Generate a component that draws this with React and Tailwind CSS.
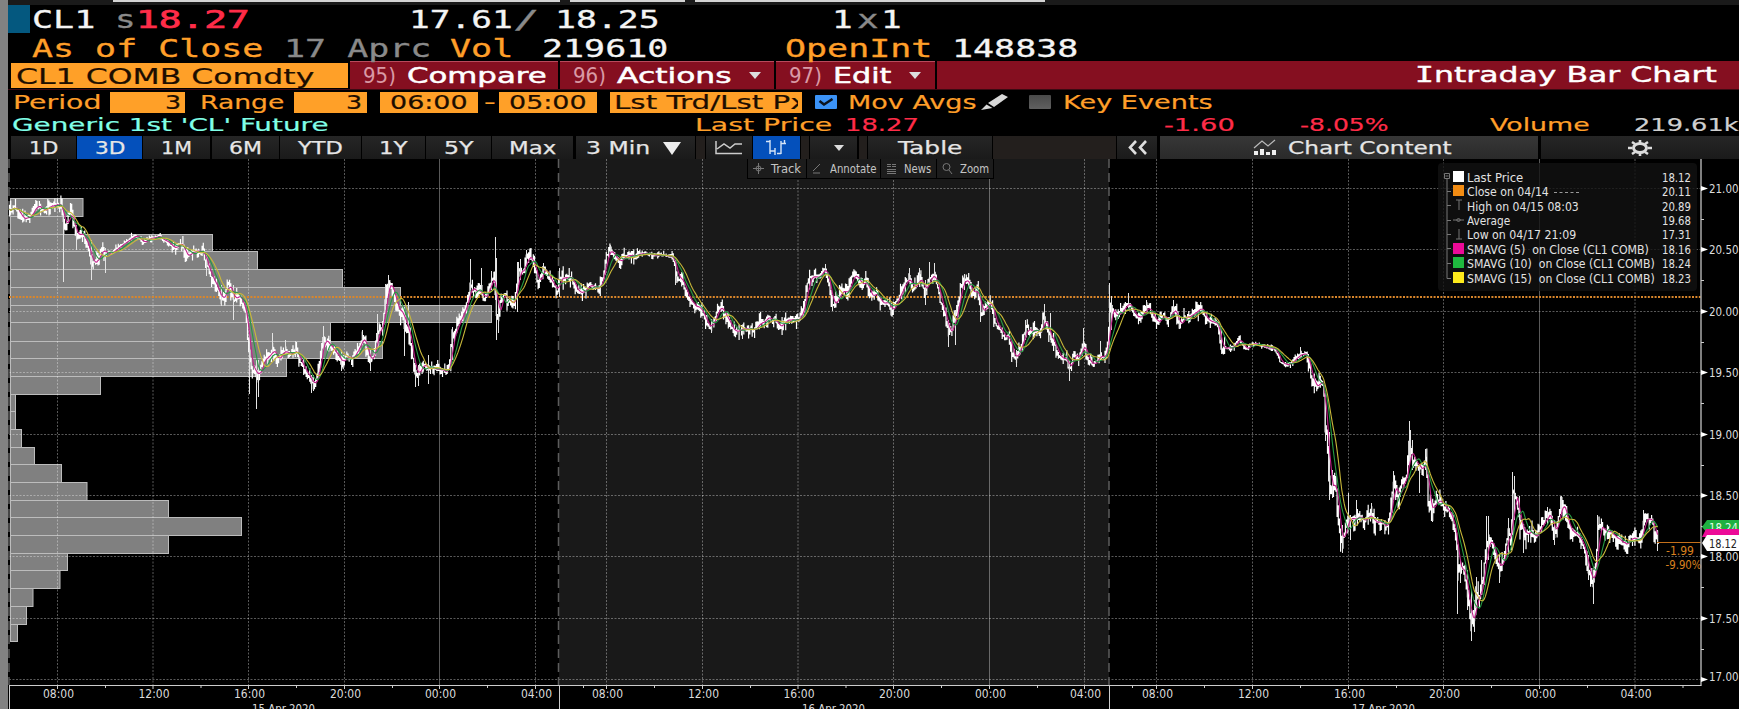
import React, { useLayoutEffect, useRef } from 'react';
import clsx from 'clsx';

// Terminal type is wider than the system fonts, so each label is stretched to the width of its box
const Fit = ({ children, className }) => {
  const box = useRef(null);
  const text = useRef(null);

  useLayoutEffect(() => {
    const scale = box.current.clientWidth / text.current.offsetWidth;
    text.current.style.transform = `scaleX(${scale})`;
  }, [children]);

  return (
    <div ref={box} className={clsx('shrink-0 whitespace-pre', className)}>
      <span ref={text} className="inline-block origin-left">{children}</span>
    </div>
  );
};

const MONO = "font-['DejaVu_Sans_Mono',monospace]";

const profile = [
  [198, 83], [215.7, 64], [234, 212.5], [251, 257.5], [269, 342.5], [287, 400.5], [304.5, 491.5],
  [322, 330.5], [340.5, 382.5], [357.5, 286.5], [375.5, 100.5], [393.5, 15.5], [410.5, 15.5],
  [429, 21.5], [447, 34.5], [464, 61.5], [482, 87], [500, 168.5], [517, 241.5], [535, 168.5],
  [553, 67.5], [570, 60], [588, 33], [606, 26.5], [623.5, 17.5], [641, 0],
];

const closes = [
  [9, 212], [13, 206], [18, 212], [23, 220], [27, 218], [31, 214], [35, 207], [40, 207], [44, 212], [48, 206],
  [52, 205], [58, 204], [61, 205], [63, 222], [66, 230], [68, 215], [71, 215], [73, 224], [76, 236], [80, 232],
  [84, 238], [88, 247], [92, 264], [95, 262], [98, 257], [101, 249], [104, 253], [110, 254], [116, 249],
  [122, 244], [127, 241], [131, 238], [135, 236], [139, 239], [143, 243], [147, 238], [153, 238], [158, 236],
  [163, 240], [168, 242], [173, 250], [177, 247], [182, 244], [186, 258], [190, 254], [196, 250], [203, 251],
  [206, 267], [209, 270], [213, 282], [217, 290], [220, 298], [223, 297], [226, 290], [229, 280], [231, 294],
  [234, 302], [238, 296], [242, 303], [246, 317], [249, 355], [252, 372], [255, 370], [258, 380], [261, 365],
  [265, 358], [269, 355], [273, 348], [277, 362], [281, 352], [286, 350], [291, 355], [296, 350], [300, 362],
  [304, 370], [309, 378], [313, 386], [317, 378], [320, 358], [323, 338], [327, 343], [332, 350], [337, 355],
  [341, 363], [346, 355], [351, 360], [356, 352], [360, 343], [363, 336], [366, 350], [370, 362], [374, 352],
  [377, 332], [382, 328], [385, 300], [388, 282], [391, 287], [395, 302], [399, 315], [402, 308], [405, 330],
  [408, 328], [411, 350], [414, 367], [418, 375], [422, 363], [427, 370], [432, 367], [436, 371], [440, 370],
  [445, 372], [449, 368], [452, 335], [456, 328], [461, 315], [466, 305], [470, 285], [474, 292], [480, 290],
  [484, 300], [489, 288], [494, 275], [497, 325], [500, 300], [504, 295], [509, 300], [514, 304], [518, 270],
  [522, 275], [526, 257], [530, 258], [534, 265], [538, 285], [543, 267], [547, 275], [552, 285], [557, 292],
  [559, 278], [564, 278], [570, 278], [574, 284], [578, 293], [584, 290], [590, 285], [598, 290], [603, 276],
  [606, 256], [610, 249], [614, 257], [619, 263], [627, 255], [635, 256], [645, 253], [655, 256], [665, 255],
  [672, 257], [675, 270], [678, 280], [682, 280], [686, 293], [692, 305], [700, 308], [705, 320], [710, 328],
  [714, 318], [720, 307], [725, 315], [729, 325], [734, 332], [742, 330], [748, 328], [753, 331], [758, 325],
  [764, 320], [768, 318], [773, 320], [780, 327], [785, 320], [792, 320], [798, 320], [803, 310], [808, 280],
  [813, 278], [819, 276], [825, 268], [828, 280], [832, 308], [837, 298], [842, 290], [847, 295], [851, 278],
  [855, 274], [860, 285], [866, 282], [871, 298], [876, 293], [882, 305], [887, 300], [891, 312], [896, 302],
  [901, 290], [906, 280], [909, 277], [913, 290], [918, 280], [920, 275], [924, 292], [929, 280], [934, 274],
  [938, 290], [941, 305], [945, 315], [948, 335], [952, 328], [956, 315], [960, 290], [964, 278], [969, 285],
  [973, 293], [977, 288], [981, 315], [986, 305], [991, 302], [995, 325], [1000, 330], [1004, 338], [1008, 335],
  [1012, 355], [1016, 357], [1021, 345], [1026, 328], [1031, 333], [1036, 330], [1040, 335], [1043, 318],
  [1047, 328], [1052, 340], [1056, 350], [1060, 360], [1066, 360], [1070, 372], [1073, 352], [1079, 358],
  [1083, 342], [1087, 360], [1093, 365], [1099, 355], [1104, 360], [1108, 340], [1110, 300], [1113, 315],
  [1118, 314], [1124, 308], [1128, 302], [1133, 312], [1138, 320], [1143, 312], [1148, 307], [1153, 318],
  [1158, 322], [1163, 313], [1168, 322], [1173, 307], [1179, 325], [1184, 318], [1189, 315], [1195, 312],
  [1200, 308], [1206, 320], [1214, 322], [1218, 325], [1221, 350], [1227, 348], [1233, 347], [1239, 338],
  [1245, 350], [1252, 343], [1260, 345], [1268, 348], [1274, 348], [1280, 362], [1285, 365], [1292, 362],
  [1298, 355], [1306, 354], [1309, 365], [1311, 380], [1317, 387], [1321, 378], [1324, 395], [1325, 430],
  [1327, 432], [1329, 485], [1332, 493], [1335, 475], [1338, 525], [1342, 545], [1346, 522], [1349, 520],
  [1354, 520], [1359, 515], [1364, 520], [1370, 515], [1374, 523], [1380, 522], [1387, 528], [1390, 510],
  [1394, 480], [1398, 500], [1403, 480], [1406, 482], [1409, 445], [1413, 460], [1418, 465], [1422, 470],
  [1426, 458], [1428, 505], [1432, 510], [1437, 500], [1442, 502], [1447, 510], [1452, 520], [1455, 530],
  [1458, 570], [1463, 568], [1467, 590], [1470, 620], [1473, 622], [1476, 595], [1480, 595], [1483, 575],
  [1486, 545], [1489, 540], [1493, 545], [1497, 565], [1500, 570], [1504, 555], [1508, 530], [1511, 545],
  [1513, 490], [1517, 502], [1520, 525], [1524, 535], [1529, 530], [1535, 536], [1540, 527], [1546, 518],
  [1550, 515], [1554, 535], [1558, 520], [1561, 500], [1564, 510], [1568, 525], [1573, 533], [1578, 535],
  [1583, 545], [1588, 570], [1593, 583], [1596, 560], [1598, 525], [1602, 528], [1608, 533], [1614, 535],
  [1620, 540], [1625, 545], [1630, 538], [1634, 540], [1640, 540], [1643, 525], [1648, 517], [1652, 520],
  [1655, 535], [1658, 543],
];

const spikes = [
  [63, 210, 282], [76, 225, 250], [91, 240, 280], [105, 248, 273], [206, 255, 276], [221, 285, 306], [233, 285, 320],
  [249, 330, 394], [256, 360, 409], [258, 360, 397], [272, 333, 352], [285, 340, 352], [295, 341, 352], [311, 375, 393],
  [313, 375, 391], [323, 326, 350], [341, 350, 371], [362, 330, 345], [370, 350, 371], [377, 314, 340], [385, 284, 310],
  [388, 275, 292], [408, 302, 330], [404, 315, 356], [415, 365, 387], [418, 365, 386], [428, 355, 384], [452, 327, 360],
  [470, 259, 290], [481, 268, 292], [491, 271, 290], [495, 237, 300], [496, 258, 340], [498, 300, 333], [517, 262, 312],
  [518, 262, 285], [520, 259, 280], [526, 250, 265], [543, 263, 275], [559, 268, 297], [610, 245, 255], [675, 260, 285],
  [711, 320, 333], [742, 325, 339], [825, 264, 275], [832, 300, 311], [891, 303, 316], [909, 268, 282], [919, 268, 282],
  [925, 280, 305], [929, 262, 285], [934, 263, 280], [948, 320, 347], [955, 310, 345], [964, 274, 290], [980, 295, 322],
  [1016, 350, 367], [1025, 320, 340], [1044, 304, 325], [1050, 313, 340], [1069, 360, 381], [1083, 328, 350],
  [1100, 341, 360], [1109, 283, 350], [1111, 296, 330], [1128, 293, 308], [1146, 300, 312], [1173, 300, 312],
  [1179, 315, 329], [1221, 330, 354], [1300, 347, 356], [1325, 395, 441], [1329, 432, 500], [1332, 470, 498],
  [1342, 525, 553], [1348, 493, 525], [1350, 515, 540], [1356, 500, 520], [1371, 503, 518], [1393, 471, 500],
  [1409, 421, 465], [1410, 430, 460], [1412, 440, 470], [1419, 465, 493], [1425, 449, 470], [1432, 505, 522],
  [1457, 545, 614], [1460, 560, 583], [1467, 570, 610], [1471, 590, 641], [1474, 600, 632], [1476, 577, 610],
  [1481, 560, 595], [1486, 516, 560], [1488, 516, 560], [1499, 555, 583], [1508, 518, 555], [1512, 472, 530],
  [1514, 476, 520], [1519, 496, 520], [1523, 525, 553], [1547, 507, 525], [1554, 520, 545], [1561, 496, 515],
  [1588, 555, 580], [1593, 570, 604], [1597, 515, 550], [1643, 510, 535], [1657, 530, 551],
];

const BAR_STEP = 1.196;

const priceAt = (x) => {
  const i = closes.findIndex((p) => p[0] >= x);
  if (i <= 0) return closes[0][1];
  const [x0, y0] = closes[i - 1];
  const [x1, y1] = closes[i];
  return y0 + ((y1 - y0) * (x - x0)) / (x1 - x0);
};

const buildBars = () => {
  let seed = 41;
  const rand = () => {
    seed = (seed * 16807) % 2147483647;
    return seed / 2147483647;
  };
  const bars = [];
  for (let x = 9.5; x <= 1658; x += BAR_STEP) {
    const quiet = (x > 108 && x < 172) || (x > 640 && x < 672) || (x > 1225 && x < 1305);
    const amp = quiet ? 2.2 : x > 1325 ? 5.5 : 4.6;
    const close = priceAt(x) + (rand() - 0.5) * amp;
    const open = bars.length ? bars[bars.length - 1].close : close;
    bars.push({
      x,
      close,
      open,
      high: Math.min(open, close) - rand() * rand() * amp * 2.4,
      low: Math.max(open, close) + rand() * rand() * amp * 2.4,
    });
  }
  return bars;
};

const bars = buildBars();
const barPath = bars
  .map((b) => `M${b.x.toFixed(1)} ${b.high.toFixed(1)}V${b.low.toFixed(1)}M${b.x.toFixed(1)} ${b.close.toFixed(1)}h1.2`)
  .join('');
const spikePath = spikes.map(([x, top, bottom]) => `M${x + 0.5} ${top}V${bottom}`).join('');

const average = (n) =>
  bars
    .map((b, i) => {
      const part = bars.slice(Math.max(0, i - n + 1), i + 1);
      const y = part.reduce((sum, p) => sum + p.close, 0) / part.length;
      return `${b.x.toFixed(1)},${y.toFixed(1)}`;
    })
    .join(' ');

const hours = [
  [57.5, '08:00'], [153, '12:00'], [248.5, '16:00'], [344.5, '20:00'], [439.5, '00:00', true], [535.5, '04:00'],
  [606.5, '08:00'], [702.5, '12:00'], [798, '16:00'], [893.5, '20:00'], [989.5, '00:00', true], [1084.5, '04:00'],
  [1156.5, '08:00'], [1252.5, '12:00'], [1348.5, '16:00'], [1443.5, '20:00'], [1539.5, '00:00', true], [1635, '04:00'],
];
const prices = ['21.00', '20.50', '20.00', '19.50', '19.00', '18.50', '18.00', '17.50', '17.00'];
const dates = [[252, '15 Apr 2020'], [802, '16 Apr 2020'], [1352, '17 Apr 2020']];
const priceY = (i) => Math.round(188 + i * 61.4) + 0.5;

const Chart = () => (
  <svg viewBox="8 159 1731 550" className="block h-[550px] w-[1731px] font-['DejaVu_Sans_Condensed','DejaVu_Sans',sans-serif] text-[12px]">
    <rect x="8" y="159" width="1731" height="550" fill="#000" />
    <rect x="559" y="159" width="550" height="526" fill="#191919" />

    {/* Volume profile */}
    {profile.slice(0, -1).map(([y, right], i) => (
      <rect key={y} x="10.5" y={Math.round(y) + 0.5} width={right - 10.5} height={Math.round(profile[i + 1][0]) - Math.round(y)} fill="#808080" stroke="#bcbcbc" />
    ))}

    {/* Grid */}
    {prices.map((p, i) => (
      <line key={p} x1="9" x2="1701" y1={priceY(i)} y2={priceY(i)} stroke="#fff" strokeOpacity="0.35" strokeDasharray="2 1.5" />
    ))}
    {hours.map(([x, , solid]) => (
      <line key={x} x1={x} x2={x} y1="159" y2="685" stroke="#fff" strokeOpacity="0.35" strokeDasharray={solid ? undefined : '2 1.5'} />
    ))}
    {[9, 558.5, 1109].map((x) => (
      <line key={x} x1={x} x2={x} y1="159" y2="685" stroke="#5c5c5c" strokeWidth="1.5" strokeDasharray="9 5" />
    ))}
    <line x1="9" x2="1701" y1="297" y2="297" stroke="#d9862b" strokeWidth="2" strokeDasharray="2 1.4" />

    {/* Price and moving averages */}
    <path d={barPath} stroke="#fff" strokeWidth="1.2" fill="none" />
    <path d={spikePath} stroke="#e4e4e4" strokeWidth="1" fill="none" />
    <polyline points={average(5)} fill="none" stroke="#c2218c" strokeWidth="1.1" />
    <polyline points={average(10)} fill="none" stroke="#259a42" strokeWidth="1.1" />
    <polyline points={average(15)} fill="none" stroke="#c9b83a" strokeWidth="1.1" />

    {/* Change since close */}
    <line x1="1657" x2="1701" y1="542.5" y2="542.5" stroke="#c4701b" />
    <text x="1666" y="555" textLength="28" lengthAdjust="spacingAndGlyphs" fill="#d9811f">-1.99</text>
    <text x="1665.5" y="569" textLength="36" lengthAdjust="spacingAndGlyphs" fill="#d9811f">-9.90%</text>

    {/* Price axis */}
    <path d="M1701 159V685.5" stroke="#aaa" strokeWidth="1.5" />
    {prices.map((p, i) => (
      <g key={p}>
        <path d={`M1701 ${priceY(i) - 2.6}l7 2.6l-7 2.6z`} fill="#fff" />
        {i < 8 && <path d={`M1701 ${priceY(i) + 31}h3`} stroke="#ccc" />}
        <text x="1709" y={i === 8 ? 681 : priceY(i) + 4.6} textLength="29.5" lengthAdjust="spacingAndGlyphs" fill="#dcdcdc">{p}</text>
      </g>
    ))}
    <path d="M1702 527l5-7h32v13h-32z" fill="#1fb141" />
    <text x="1709" y="531.5" textLength="29" lengthAdjust="spacingAndGlyphs" fill="#e6ffe9">18.24</text>
    <path d="M1702 537l4-8h33v8z" fill="#ec0a98" />
    <path d="M1702 543l5-8h32v16h-32z" fill="#fff" />
    <text x="1709" y="547.5" textLength="28" lengthAdjust="spacingAndGlyphs" fill="#222">18.12</text>

    {/* Time axis */}
    <path d="M9 685.5H1701.5M9.5 685V709M559.5 685V709M1109.5 685V709" stroke="#ccc" />
    {hours.map(([x, label]) => (
      <g key={x}>
        <path d={`M${x} 685v4M${x + 48} 685v3`} stroke="#ccc" />
        <text x={x - 14.5} y="698" textLength="31" lengthAdjust="spacingAndGlyphs" fill="#dcdcdc">{label}</text>
      </g>
    ))}
    {dates.map(([x, label]) => (
      <text key={x} x={x} y="713" textLength="63" lengthAdjust="spacingAndGlyphs" fill="#dcdcdc">{label}</text>
    ))}
  </svg>
);

const legend = [
  { mark: 'bg-white', label: 'Last Price', width: 'w-[56px]', value: '18.12' },
  { mark: 'bg-[#f28c13]', label: 'Close on 04/14', width: 'w-[82px]', value: '20.11', dash: true },
  { icon: 'M3 2h6M6 2v10', label: 'High on 04/15 08:03', width: 'w-[112px]', value: '20.89' },
  { icon: 'M0 7h11M3.5 7L5.5 5L7.5 7L5.5 9z', label: 'Average', width: 'w-[43px]', value: '19.68' },
  { icon: 'M3 12h6M6 2v10', label: 'Low on 04/17 21:09', width: 'w-[109px]', value: '17.31' },
  { mark: 'bg-[#ec0a98]', label: 'SMAVG (5)  on Close (CL1 COMB)', width: 'w-[182px]', value: '18.16' },
  { mark: 'bg-[#1fb93f]', label: 'SMAVG (10)  on Close (CL1 COMB)', width: 'w-[188px]', value: '18.24' },
  { mark: 'bg-[#fdea1c]', label: 'SMAVG (15)  on Close (CL1 COMB)', width: 'w-[188px]', value: '18.23' },
];

const Legend = () => (
  <div className="absolute left-[1430px] top-[4px] flex h-[128px] w-[259px] rounded-sm bg-[#121212]/80 pl-[6px] pt-[6px] font-['DejaVu_Sans_Condensed','DejaVu_Sans',sans-serif] text-[12px] text-[#e2e2e2]">
    <svg width="9" height="116" viewBox="0 0 9 116" fill="none" stroke="#777">
      <path d="M0.5 4.5h5v5h-5zM1.5 7h3M3 10v99.5h4M3 22.5h4M3 36.5h4M3 51.5h4M3 65.5h4M3 79.5h4M3 94.5h4" />
    </svg>
    <div className="flex flex-col">
      {legend.map((row) => (
        <div key={row.label} className="flex h-[14.45px] items-center leading-[14px]">
          {row.mark ? (
            <div className={clsx('h-[11px] w-[11px]', row.mark)} />
          ) : (
            <svg width="11" height="14" viewBox="0 0 11 14" fill="none" stroke="#777"><path d={row.icon} /></svg>
          )}
          <div className="ml-[3px] flex w-[195px] items-center pt-[3px]">
            <Fit className={row.width}>{row.label}</Fit>
            {row.dash && <div className="ml-[5px] w-[25px] border-t border-dashed border-[#999]" />}
          </div>
          <Fit className="w-[29px] pt-[3px]">{row.value}</Fit>
        </div>
      ))}
    </div>
  </div>
);

const chartTools = [
  { label: 'Track', cell: 'w-[58px]', text: 'w-[30px]', icon: 'M5.5 0v11M0 5.5h11M3 5.5a2.5 2.5 0 1 0 5 0a2.5 2.5 0 1 0-5 0' },
  { label: 'Annotate', cell: 'w-[74px]', text: 'w-[46px]', icon: 'M1 8L8 1M1 10h7' },
  { label: 'News', cell: 'w-[56px]', text: 'w-[27px]', icon: 'M1 1.5h4M6 1.5h4M1 3.5h4M6 3.5h4M1 6.5h9M1 8.5h9M1 10.5h9' },
  { label: 'Zoom', cell: 'w-[57px]', text: 'w-[29px]', icon: 'M1 4a3.5 3.5 0 1 0 7 0a3.5 3.5 0 1 0-7 0M7 7l3 4' },
];

const ChartTools = () => (
  <div className="absolute left-[739px] top-0 flex h-[20px] border border-t-0 border-black bg-[#1c1c1c] font-['DejaVu_Sans_Condensed','DejaVu_Sans',sans-serif] text-[12px] leading-[20px] text-[#c4c4c4]">
    {chartTools.map((t, i) => (
      <div key={t.label} className={clsx('flex items-center', t.cell, i > 0 && 'border-l border-black')}>
        <svg width="11" height="12" viewBox="0 0 11 12" fill="none" stroke="#777" className="ml-[5px] mr-[7px]"><path d={t.icon} /></svg>
        <Fit className={t.text}>{t.label}</Fit>
      </div>
    ))}
  </div>
);

const ranges = [
  { label: '1D', cell: 'w-[65px]', text: 'w-[29px]' },
  { label: '3D', cell: 'w-[65px]', text: 'w-[30px]', active: true },
  { label: '1M', cell: 'w-[67px]', text: 'w-[31px]' },
  { label: '6M', cell: 'w-[67px]', text: 'w-[33px]' },
  { label: 'YTD', cell: 'w-[81px]', text: 'w-[45px]' },
  { label: '1Y', cell: 'w-[63px]', text: 'w-[28px]' },
  { label: '5Y', cell: 'w-[65px]', text: 'w-[29px]' },
  { label: 'Max', cell: 'w-[81px]', text: 'w-[47px]' },
];

const TAB = 'flex h-full items-center justify-center bg-linear-to-b from-[#262626] to-[#1a1a1a]';

const Toolbar = () => (
  <div className="flex h-[23px] gap-x-[1.2px] bg-black pl-[3px] text-[18px] leading-[23px] text-[#e6e6e6] [-webkit-text-stroke:0.25px]">
    {ranges.map((r) => (
      <div key={r.label} className={clsx('flex h-full items-center justify-center', r.cell, r.active ? 'bg-[#0450bb]' : 'bg-linear-to-b from-[#262626] to-[#1a1a1a]')}>
        <Fit className={r.text}>{r.label}</Fit>
      </div>
    ))}
    <div className={clsx(TAB, 'ml-[1px] w-[119px] pr-[4px]')}>
      <Fit className="w-[64px]">3 Min</Fit>
      <svg width="18" height="14" className="ml-[13px]"><path d="M0 1h18L9 14z" fill="#eee" /></svg>
    </div>
    <div className="w-[9px] bg-[#231f1d]" />
    <div className={clsx(TAB, 'w-[46px]')}>
      <svg width="28" height="15" viewBox="0 0 28 15" fill="none" stroke="#ccc" strokeWidth="1.5">
        <path d="M1 1v12.5h26M2 9l7-5l6 4l5-4h7" />
      </svg>
    </div>
    <div className="flex w-[47px] items-center justify-center bg-[#0450bb]">
      <svg width="24" height="18" viewBox="0 0 24 18" fill="none" stroke="#d5e4f7" strokeWidth="1.4">
        <path d="M1 2.5h4M5 1v14M5 12h5M12 14.5h4M16 2v13M16 4.500h5M10 9v7M19.500 1v4" />
      </svg>
    </div>
    <div className="w-[8px] bg-[#231f1d]" />
    <div className={clsx(TAB, 'w-[47px] pl-[11px]')}>
      <svg width="10" height="6"><path d="M0 0h10L5 6z" fill="#ddd" /></svg>
    </div>
    <div className="w-[8px] bg-[#231f1d]" />
    <div className={clsx(TAB, 'w-[124px] pl-[2px]')}>
      <Fit className="w-[65px]">Table</Fit>
    </div>
    <div className="w-[123px] bg-[#231f1d]" />
    <div className={clsx(TAB, 'w-[40px]')}>
      <svg width="21" height="15" viewBox="0 0 21 15" fill="none" stroke="#ddd" strokeWidth="2.6"><path d="M9 1L3 7.5L9 14M19 1L13 7.5L19 14" /></svg>
    </div>
    <div className="ml-[2px] flex w-[378px] items-center bg-linear-to-b from-[#373737] to-[#2a2a2a]">
      <svg width="24" height="17" viewBox="0 0 24 17" className="ml-[93px]">
        <path d="M1 9L9 2L15 7L22 1" fill="none" stroke="#bbb" strokeWidth="1.2" />
        <path d="M1 16v-4h4v4zM7 16v-6h4v6zM13 16v-3h4v3zM19 16v-5h4v5z" fill="#eee" />
      </svg>
      <Fit className="ml-[11px] w-[164px]">Chart Content</Fit>
    </div>
    <div className={clsx(TAB, 'ml-[1px] grow')}>
      <svg width="24" height="16" viewBox="-12 -8 24 16" fill="none" stroke="#ddd">
        <ellipse rx="6.5" ry="4.5" strokeWidth="3" />
        <path d="M0 -8v3M0 5v3M-12 0h4M8 0h4M-8 -6l3 2M8 -6l-3 2M-8 6l3 -2M8 6l-3 -2" strokeWidth="2.6" />
      </svg>
    </div>
  </div>
);

const Caret = () => (
  <svg width="12" height="7"><path d="M0 0h12L6 7z" fill="#ddd" /></svg>
);

const NUM = "w-[33px] font-['DejaVu_Sans_Condensed','DejaVu_Sans',sans-serif] text-[#d99aa5]";

const App = () => {
  return (
    <div className="flex h-[709px] w-[1739px] overflow-hidden bg-black font-['DejaVu_Sans',sans-serif]">
      <div className="w-[8px] shrink-0 bg-[#828282]" />
      <div className="flex w-[1731px] shrink-0 flex-col">
        {/* Edge of the window above */}
        <div className="flex h-[5px] items-start bg-[#1a1a1a]">
          <div className="ml-[105px] h-[2px] w-[447px] bg-[#d4d4d4]" />
          <div className="ml-[10px] h-[2px] w-[115px] bg-[#d4d4d4]" />
          <div className="ml-[10px] h-[2px] w-[350px] bg-[#d4d4d4]" />
        </div>

        {/* Quote */}
        <div className={clsx('flex h-[28px] text-[24.5px] leading-[30px] text-[#f4f4f4] [-webkit-text-stroke:0.3px]', MONO)}>
          <div className="w-[22px] shrink-0 bg-[#04587f]" />
          <Fit className="ml-[2px] w-[63px]">CL1</Fit>
          <Fit className="ml-[20px] w-[21px] text-[#8a8a8a]">s</Fit>
          <Fit className="w-[114px] text-[#ff2c48] [-webkit-text-stroke:0.7px]"><span>18.27</span></Fit>
          <Fit className="ml-[159px] w-[104px]">17.61</Fit>
          <Fit className="w-[27px] text-[#8a8a8a]">/</Fit>
          <Fit className="ml-[15px] w-[105px]">18.25</Fit>
          <Fit className="ml-[172px] w-[21px]">1</Fit>
          <Fit className="ml-[4px] w-[22px] text-[#8a8a8a]">x</Fit>
          <Fit className="ml-[2px] w-[21px]">1</Fit>
        </div>
        <div className={clsx('flex h-[28px] text-[24.5px] leading-[32px] text-[#f4f4f4] [-webkit-text-stroke:0.3px]', MONO)}>
          <Fit className="ml-[24px] w-[231px] text-[#ff9f29]">As of Close</Fit>
          <Fit className="ml-[21px] w-[147px] text-[#8a8a8a]">17 Aprc</Fit>
          <Fit className="ml-[19px] w-[63px] text-[#ff9f29]">Vol</Fit>
          <Fit className="ml-[29px] w-[127px]">219610</Fit>
          <Fit className="ml-[116px] w-[147px] text-[#ff9f29]">OpenInt</Fit>
          <Fit className="ml-[20px] w-[127px]">148838</Fit>
        </div>

        {/* Menu bar */}
        <div className="flex h-[29px] gap-x-[2px] border-b border-[#3a0a12] text-[22px] leading-[27px] text-white">
          <div className="mb-px ml-[3px] mt-[2px] flex w-[337px] bg-[#ffa028] pl-[5px] text-[#1c0d00] [-webkit-text-stroke:0.2px]">
            <Fit className="w-[298px]">CL1 COMB Comdty</Fit>
          </div>
          <div className="flex w-[208px] items-center border-t border-[#b84a5c] bg-[#850f20] pl-[13px]">
            <Fit className={NUM}>95)</Fit>
            <Fit className="ml-[11px] w-[140px] [-webkit-text-stroke:0.5px]">Compare</Fit>
          </div>
          <div className="flex w-[214px] items-center border-t border-[#b84a5c] bg-[#850f20] pl-[13px]">
            <Fit className={NUM}>96)</Fit>
            <Fit className="ml-[11px] mr-[18px] w-[114px] [-webkit-text-stroke:0.5px]">Actions</Fit>
            <Caret />
          </div>
          <div className="flex w-[159px] items-center border-t border-[#b84a5c] bg-[#850f20] pl-[13px]">
            <Fit className={NUM}>97)</Fit>
            <Fit className="ml-[11px] mr-[17px] w-[59px] [-webkit-text-stroke:0.5px]">Edit</Fit>
            <Caret />
          </div>
          <div className="flex grow justify-end bg-[#850f20] pr-[22px]">
            <Fit className="w-[302px] [-webkit-text-stroke:0.4px]"><span className={MONO}>I</span>ntraday Bar Chart</Fit>
          </div>
        </div>

        {/* Settings */}
        <div className="flex h-[24px] items-start pt-[1px] text-[19px] leading-[23px] text-[#ff9f29] [-webkit-text-stroke:0.2px]">
          <Fit className="ml-[5px] w-[88px]">Period</Fit>
          <div className="ml-[9px] mt-px flex h-[21px] w-[75px] justify-end bg-[#ffa028] pr-[4px] leading-[21px] text-[#1c0d00]">
            <Fit className="w-[16px]">3</Fit>
          </div>
          <Fit className="ml-[15px] w-[84px]">Range</Fit>
          <div className="ml-[10px] mt-px flex h-[21px] w-[73px] justify-end bg-[#ffa028] pr-[5px] leading-[21px] text-[#1c0d00]">
            <Fit className="w-[16px]">3</Fit>
          </div>
          <div className="ml-[13px] mt-px flex h-[21px] w-[98px] justify-center bg-[#ffa028] leading-[21px] text-[#1c0d00]">
            <Fit className="w-[78px]">06:00</Fit>
          </div>
          <Fit className="ml-[6px] w-[12px]">-</Fit>
          <div className="ml-[3px] mt-px flex h-[21px] w-[98px] justify-center bg-[#ffa028] leading-[21px] text-[#1c0d00]">
            <Fit className="w-[78px]">05:00</Fit>
          </div>
          <div className="ml-[13px] mt-px flex h-[21px] w-[192px] bg-[#ffa028] pl-[4px] leading-[21px] text-[#1c0d00]">
            <div className="w-[184px] overflow-hidden">
              <Fit className="w-[193px]">Lst Trd/Lst Px</Fit>
            </div>
          </div>
          <div className="ml-[13px] mt-[4px] flex h-[14px] w-[22px] items-center justify-center rounded-[1px] bg-[#3b93f7]">
            <svg width="16" height="8" viewBox="0 0 16 8" fill="none" stroke="#0a1420" strokeWidth="2.5"><path d="M1.5 3l4.5 3.5L14.5 1" /></svg>
          </div>
          <Fit className="ml-[11px] w-[128px]">Mov Avgs</Fit>
          <svg width="28" height="17" viewBox="0 0 28 17" className="ml-[5px] mt-[2px]" fill="#d8d8d8">
            <path d="M7 10L21 1L27 4L13 14zM5.5 11.5L11.5 15L0 17z" />
          </svg>
          <div className="ml-[20px] mt-[4px] h-[14px] w-[22px] rounded-[1px] bg-linear-to-b from-[#4a4a4a] to-[#606060]" />
          <Fit className="ml-[12px] w-[150px]">Key Events</Fit>
        </div>

        {/* Security summary */}
        <div className="flex h-[22px] items-start text-[18.5px] leading-[21px] text-[#ff9f29] [-webkit-text-stroke:0.2px]">
          <Fit className="ml-[4px] w-[316px] text-[#80ffe8]">Generic 1st 'CL' Future</Fit>
          <Fit className="ml-[367px] w-[138px]">Last Price</Fit>
          <Fit className="ml-[12px] w-[74px] text-[#ff2c48]">18.27</Fit>
          <Fit className="ml-[245px] w-[71px] text-[#ff2c48]">-1.60</Fit>
          <Fit className="ml-[65px] w-[88px] text-[#ff2c48]">-8.05%</Fit>
          <Fit className="ml-[102px] w-[100px]">Volume</Fit>
          <Fit className="ml-[44px] w-[104px] text-[#d0d0d0]">219.61k</Fit>
        </div>

        <Toolbar />

        <div className="relative">
          <Chart />
          <ChartTools />
          <Legend />
        </div>
      </div>
    </div>
  );
};

export default App;
